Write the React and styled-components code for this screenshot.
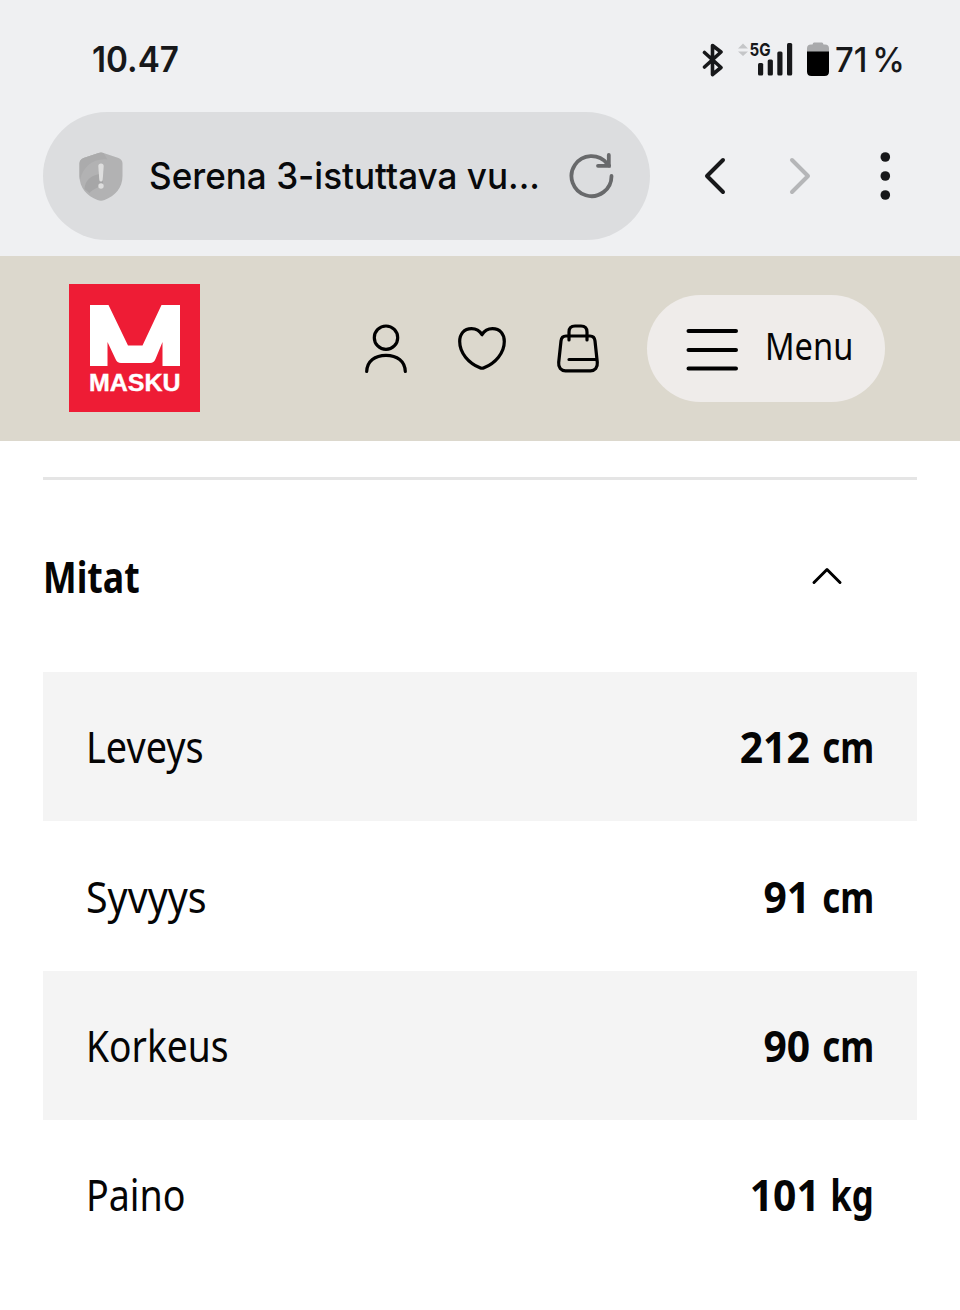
import React from 'react'
import { styled, createGlobalStyle } from 'styled-components'

const GlobalStyle = createGlobalStyle`
* {
box-sizing: border-box;
}
body {
margin: 0;
background-color: #fff;
color: #050505;
font-family: "Noto Sans", "Open Sans", sans-serif;
}
button {
padding: 0;
border: none;
background: none;
color: inherit;
cursor: pointer;
}
svg {
display: block;
flex: none;
}
`
const Page = styled.div`
width: 960px;
height: 1310px;
overflow: hidden;
background-color: #fff;
`
const BrowserBar = styled.div`
height: 256px;
background-color: #eff0f2;
font-family: Inter, "Liberation Sans", sans-serif;
`
const StatusBar = styled.div`
height: 112px;
padding: 7px 57px 0 92px;
display: flex;
align-items: center;
justify-content: space-between;
color: #17181a;
`
// condensed or widened run of text, grows from its own edge
const Text = styled.span`
display: inline-block;
flex: none;
white-space: nowrap;
font-size: ${props => props.$size}px;
font-weight: ${props => props.$weight || 400};
line-height: 1;
transform: scaleX(${props => props.$stretch || 1});
transform-origin: ${props => props.$right ? 'right' : 'left'} center;
`
const StatusIcons = styled.div`
display: flex;
align-items: center;
`
const SignalText = styled.text`
font-family: Inter, "Liberation Sans", sans-serif;
font-size: 18px;
font-weight: 700;
`
const Gap = styled.div`
width: ${props => props.$width}px;
`
const Percent = styled.div`
width: 68px;
padding-top: 3px;
word-spacing: -4px;
`
const AddressRow = styled.div`
height: 128px;
padding: 0 68px 0 43px;
display: flex;
align-items: center;
`
const AddressPill = styled.div`
width: 607px;
height: 128px;
padding: 0 0 0 36px;
display: flex;
align-items: center;
border-radius: 64px;
background-color: #dcdddf;
`
const PageTitle = styled.div`
width: 446px;
padding: 0 0 2px 26px;
color: #08090b;
`
const BrowserButtons = styled.div`
flex: 1;
padding-left: 53px;
display: flex;
align-items: center;
gap: 61px;
`
const SiteHeader = styled.header`
height: 185px;
padding: 0 75px 0 69px;
display: flex;
align-items: center;
justify-content: space-between;
background-color: #dcd8cd;
`
const Logo = styled.div`
width: 131px;
height: 128px;
margin-bottom: 1px;
padding-top: 21px;
display: flex;
flex-direction: column;
align-items: center;
background-color: #ee1c35;
color: #fff;
font-family: "Liberation Sans", sans-serif;
`
const LogoName = styled.div`
width: 91px;
margin-top: 5px;
-webkit-text-stroke: 0.4px #fff;
`
const Actions = styled.nav`
display: flex;
align-items: center;
`
const IconButton = styled.button`
width: 96px;
height: 56px;
display: flex;
align-items: center;
justify-content: center;
`
const MenuButton = styled.button`
width: 238px;
height: 107px;
margin-left: 21px;
padding: 0 0 0 39px;
display: flex;
align-items: center;
gap: 26px;
border-radius: 54px;
background-color: #efecea;
font-family: "Noto Sans", sans-serif;
`
const MenuLabel = styled.div`
padding-bottom: 5px;
`
const Content = styled.main`
padding: 36px 43px 0;
`
const SectionHead = styled.div`
height: 195px;
padding: 0 74px 0 0;
display: flex;
align-items: center;
justify-content: space-between;
border-top: 3px solid #e5e5e5;
`
const Row = styled.div`
height: 149.4px;
padding: 0 43px;
display: flex;
align-items: center;
justify-content: space-between;
background-color: ${props => props.$shaded ? '#f4f4f4' : '#fff'};
`
const Value = styled.div`
display: flex;
align-items: center;
`

const measures = [
  { name: 'Leveys', amount: '212', unit: 'cm', stretch: 0.88 },
  { name: 'Syvyys', amount: '91', unit: 'cm', stretch: 0.915 },
  { name: 'Korkeus', amount: '90', unit: 'cm', stretch: 0.865 },
  { name: 'Paino', amount: '101', unit: 'kg', stretch: 0.875 },
]

const Bluetooth = () => (
  <svg width="22" height="34" viewBox="0 0 22 34" fill="none" stroke="#17181a" strokeWidth="3.600" strokeLinejoin="round" strokeLinecap="round">
    <path d="M2.500 9.500 L19 24.500 L10.500 31.500 V2.500 L19 9 L2.500 24" />
  </svg>
)

const Signal = () => (
  <svg width="56" height="52" viewBox="0 -8 56 52" fill="#17181a">
    <path d="M0 6.500 L5 1.500 L10 6.500 Z M0 9.500 L5 14 L10 9.500 Z" fill="#c5c6c8" />
    <SignalText x="11.500" y="14" textLength="21" lengthAdjust="spacingAndGlyphs">5G</SignalText>
    <rect x="20" y="21" width="5.200" height="12.500" rx="1.500" />
    <rect x="29.700" y="17.500" width="5.200" height="16" rx="1.500" />
    <rect x="39.300" y="9.500" width="5.200" height="24" rx="1.500" />
    <rect x="49" y="1" width="5.200" height="32.500" rx="1.500" />
  </svg>
)

const Battery = () => (
  <svg width="22" height="36" viewBox="0 0 22 36">
    <path d="M7 0.500 H15 Q16 0.500 16.500 2.500 H18 Q22 2.500 22 6.500 V10 H0 V6.500 Q0 2.500 4 2.500 H5.500 Q6 0.500 7 0.500 Z" fill="#a9aaac" />
    <path d="M0 9.500 H22 V29.500 Q22 34 17.500 34 H4.500 Q0 34 0 29.500 Z" fill="#000" />
  </svg>
)

const Shield = () => (
  <svg width="44" height="50" viewBox="0 -1 44 50">
    <path d="M19.500 1 Q22 0 24.500 1 L39.500 6 Q43.500 7.500 43.500 11.500 V24 C43.500 36 36 44 25.500 48 Q22 49.500 18.500 48 C8 44 0.500 36 0.500 24 V11.500 Q0.500 7.500 4.500 6 Z" fill="#b2b2b3" />
    <path d="M19.500 1 Q22 0 24.500 1 L28.500 7.500 C14 6 4 15 1 28 Q0.500 26 0.500 24 V11.500 Q0.500 7.500 4.500 6 Z" fill="#ababac" />
    <path d="M5.500 37 C6 29 11 24 20 22 H24 V34 C17 35 12 39 10.500 41 Z" fill="#a6a6a7" />
    <path d="M19.300 14 Q19.300 11.500 22 11.500 Q24.700 11.500 24.700 14 L23.700 28 Q23.500 29.500 22 29.500 Q20.500 29.500 20.300 28 Z" fill="#dedede" />
    <circle cx="22" cy="34" r="2.700" fill="#dedede" />
  </svg>
)

const Reload = () => (
  <svg width="46" height="46" viewBox="0 0 46 46" fill="none" stroke="#68696b" strokeWidth="3.800" strokeLinecap="round" strokeLinejoin="round">
    <path d="M42.500 23 A20 20 0 1 1 38 10.500 L40 12.500" />
    <path d="M39.800 2 V12.800 H29" strokeLinejoin="miter" />
  </svg>
)

const App = () => {
  return (
    <Page>
      <GlobalStyle />
      <BrowserBar>
        <StatusBar>
          <Text $size={35} $weight={600} $stretch={0.95}>10.47</Text>
          <StatusIcons>
            <Bluetooth />
            <Gap $width={14} />
            <Signal />
            <Gap $width={13} />
            <Battery />
            <Gap $width={6} />
            <Percent><Text $size={33.5} $weight={500} $stretch={0.98}>71 %</Text></Percent>
          </StatusIcons>
        </StatusBar>
        <AddressRow>
          <AddressPill>
            <Shield />
            <PageTitle><Text $size={37} $weight={500} $stretch={0.948}>Serena 3-istuttava vu...</Text></PageTitle>
            <Reload />
          </AddressPill>
          <BrowserButtons>
            <svg width="24" height="38" viewBox="0 0 24 38" fill="none" stroke="#17181a" strokeWidth="4" strokeLinecap="round" strokeLinejoin="round">
              <path d="M20 3 L4 19 L20 35" />
            </svg>
            <svg width="24" height="38" viewBox="0 0 24 38" fill="none" stroke="#b5b6b8" strokeWidth="4" strokeLinecap="round" strokeLinejoin="round">
              <path d="M4 3 L20 19 L4 35" />
            </svg>
            <svg width="18" height="50" viewBox="0 0 18 50" fill="#17181a">
              <circle cx="12.300" cy="6" r="4.800" />
              <circle cx="12.300" cy="25" r="4.800" />
              <circle cx="12.300" cy="44" r="4.800" />
            </svg>
          </BrowserButtons>
        </AddressRow>
      </BrowserBar>
      <SiteHeader>
        <Logo>
          <svg width="90" height="61" viewBox="0 0 90 61" fill="#fff">
            <path d="M0 0 H18.500 L38 40.500 H52.500 L71.500 0 H90 V61 H72.500 V37 L65.500 54 Q64 58 60 58 H31 Q27 58 25.500 54 L17.500 37 V61 H0 Z" />
          </svg>
          <LogoName><Text $size={24} $weight={700} $stretch={1.04}>MASKU</Text></LogoName>
        </Logo>
        <Actions>
          <IconButton aria-label="Oma tili">
            <svg width="44" height="50" viewBox="0 0 44 50" fill="none" stroke="#000" strokeWidth="3.200" strokeLinecap="round">
              <circle cx="22" cy="13.700" r="11.700" />
              <path d="M2.700 47.500 C3 37 11 31.300 22 31.300 C33 31.300 41 37 41.300 47.500" />
            </svg>
          </IconButton>
          <IconButton aria-label="Suosikit">
            <svg width="50" height="46" viewBox="0 0 50 46" fill="none" stroke="#000" strokeWidth="3.200" strokeLinecap="round" strokeLinejoin="round">
              <path d="M25 8.700 C22.500 4.500 18.500 2.700 14.500 2.700 C7 2.700 2.700 8 2.700 15.500 C2.700 27 11.500 37 23 41.800 Q25 42.700 27 41.800 C38.500 37 47.300 27 47.300 15.500 C47.300 8 43 2.700 35.500 2.700 C31.500 2.700 27.500 4.500 25 8.700 Z" />
            </svg>
          </IconButton>
          <IconButton aria-label="Ostoskori">
            <svg width="44" height="50" viewBox="0 0 44 50" fill="none" stroke="#000" strokeWidth="3.200" strokeLinecap="round">
              <path d="M10 12 H34 C37 12 38.700 14 39 17 L41.300 38.500 C41.800 43.500 39 46.800 34.500 46.800 H9.500 C5 46.800 2.200 43.500 2.700 38.500 L5 17 C5.300 14 7 12 10 12 Z" />
              <path d="M13 16 V8 Q13 2 19 2 H25 Q31 2 31 8 V16 M13 35.500 H40" />
            </svg>
          </IconButton>
          <MenuButton>
            <svg width="53" height="45" viewBox="0 0 53 45" stroke="#000" strokeWidth="4" strokeLinecap="round">
              <path d="M2.500 5 H50 M2.500 24 H50 M2.500 42.600 H50" />
            </svg>
            <MenuLabel><Text $size={37.5} $stretch={0.87}>Menu</Text></MenuLabel>
          </MenuButton>
        </Actions>
      </SiteHeader>
      <Content>
        <SectionHead>
          <Text $size={43} $weight={700} $stretch={0.83}>Mitat</Text>
          <svg width="32" height="18" viewBox="0 0 32 18" fill="none" stroke="#000" strokeWidth="3" strokeLinecap="round" strokeLinejoin="round">
            <path d="M3 15.500 L16 2.500 L29 15.500" />
          </svg>
        </SectionHead>
        {measures.map((item, index) => (
          <Row key={item.name} $shaded={index % 2 === 0}>
            <Text $size={43} $stretch={item.stretch}>{item.name}</Text>
            <Value>
              <Text $size={43} $weight={700} $stretch={0.95} $right>{item.amount}</Text>
              <Text $size={43} $weight={700} $stretch={0.81} $right>{item.unit}</Text>
            </Value>
          </Row>
        ))}
      </Content>
    </Page>
  )
}

export default App
